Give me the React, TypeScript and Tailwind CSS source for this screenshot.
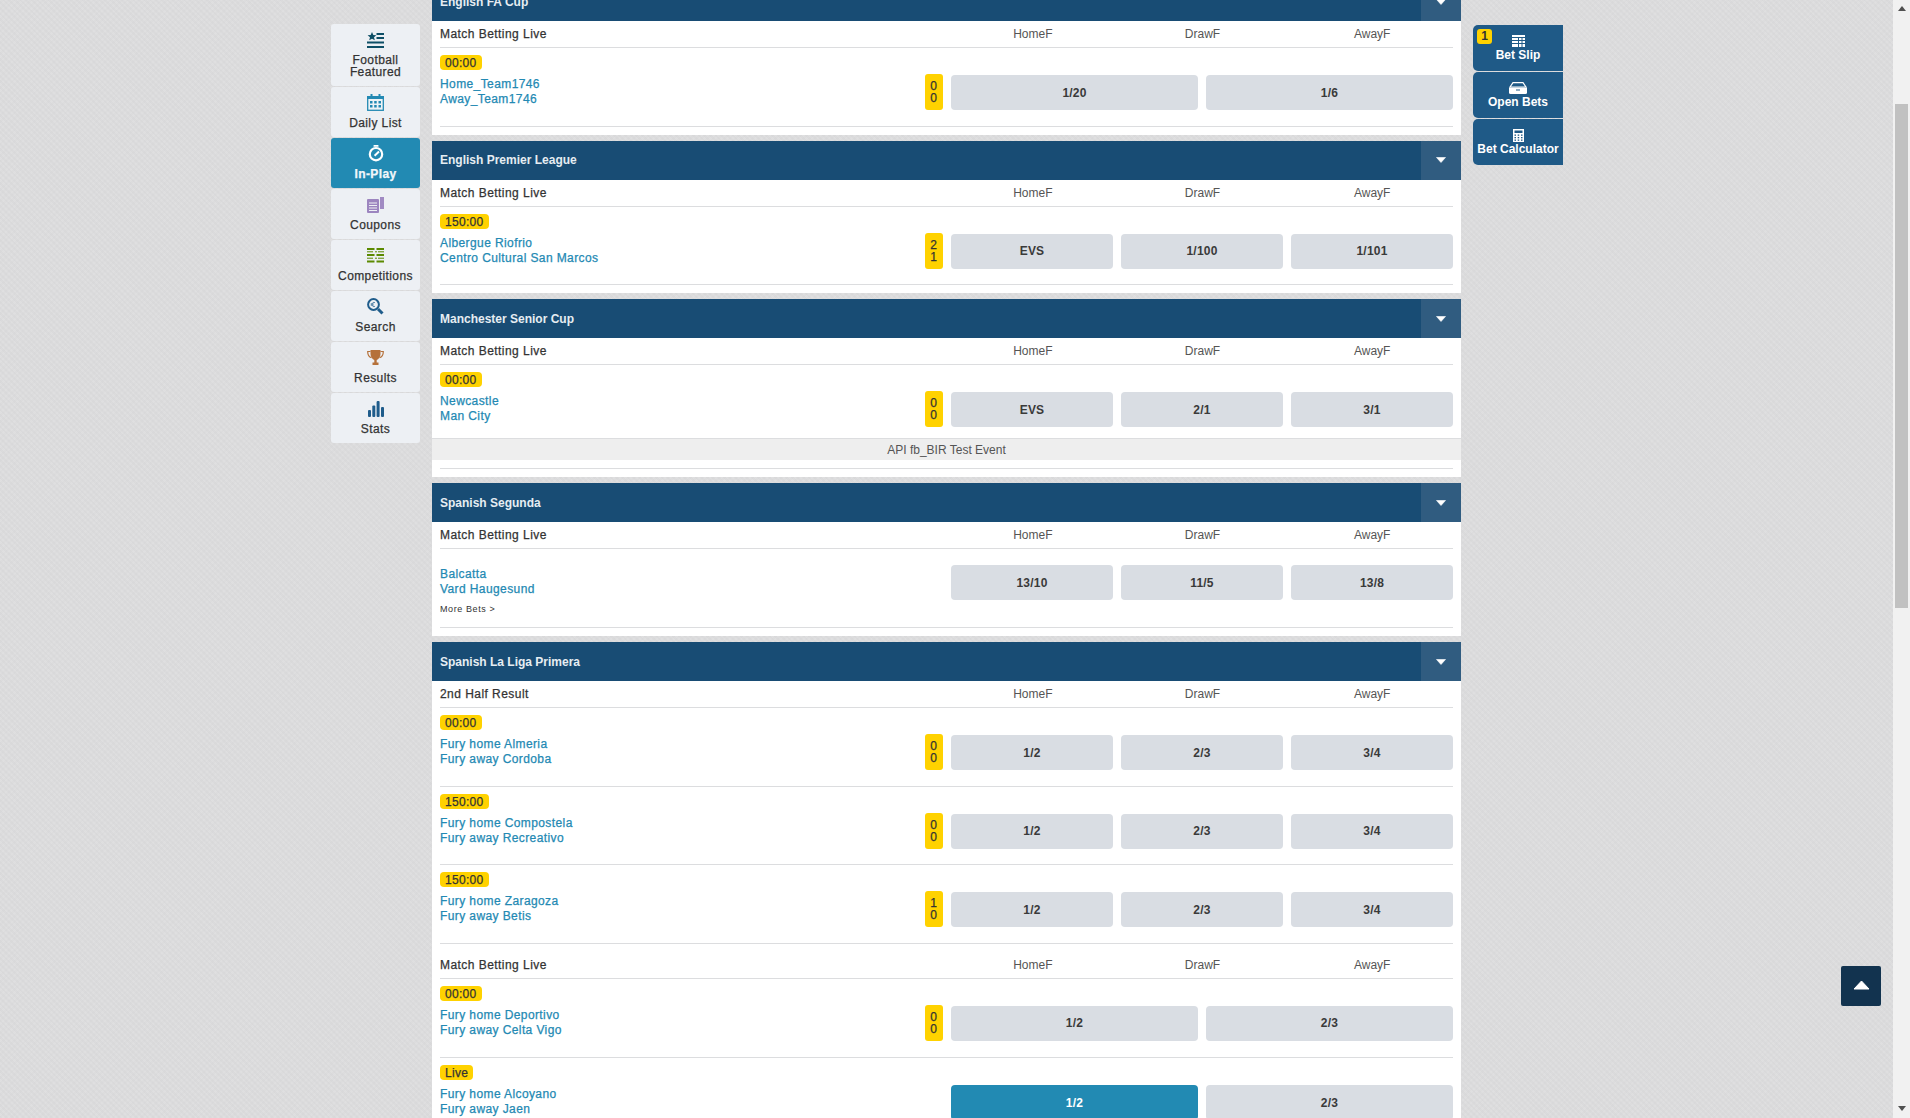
import React from "react";

const font = "font-['Liberation_Sans',Arial,sans-serif]";
const thick = "[-webkit-text-stroke:0.25px_currentColor]";

function IconFeatured() {
  return (
    <svg width="17" height="16" viewBox="0 0 17 16" fill="#0e4f66">
      <path d="M5 0l1.3 2.9 3.1.3-2.4 2 .8 3L5 6.7 2.200 8.200l.8-3-2.400-2 3.100-.3z" />
      <rect x="9.500" y="1" width="7.500" height="2" />
      <rect x="9.500" y="5" width="7.500" height="2" />
      <rect x="0" y="9.500" width="17" height="2" />
      <rect x="0" y="14" width="17" height="2" />
    </svg>
  );
}
function IconCalendar() {
  return (
    <svg width="17" height="17" viewBox="0 0 17 17" fill="none">
      <rect x="0.700" y="2.700" width="15.600" height="13.600" stroke="#2389b3" strokeWidth="1.300" fill="#eef3f6" />
      <rect x="0" y="2" width="17" height="3" fill="#2389b3" />
      <rect x="3.500" y="0" width="2" height="3.500" fill="#2389b3" />
      <rect x="11.500" y="0" width="2" height="3.500" fill="#2389b3" />
      <g fill="#2389b3">
        <rect x="3" y="7" width="2.500" height="2.500" /><rect x="7.200" y="7" width="2.500" height="2.500" /><rect x="11.500" y="7" width="2.500" height="2.500" />
        <rect x="3" y="11" width="2.500" height="2.500" /><rect x="7.200" y="11" width="2.500" height="2.500" /><rect x="11.500" y="11" width="2.500" height="2.500" />
      </g>
    </svg>
  );
}
function IconWatch() {
  return (
    <svg width="16" height="17" viewBox="0 0 16 17" fill="none">
      <circle cx="8" cy="9.200" r="6.200" stroke="#fff" strokeWidth="2.200" />
      <rect x="5.500" y="0" width="5" height="1.800" rx=".5" fill="#fff" />
      <path d="M6.600 10.700L11 6.500" stroke="#fff" strokeWidth="2" />
    </svg>
  );
}
function IconCoupons() {
  return (
    <svg width="17" height="16" viewBox="0 0 17 16">
      <rect x="13" y="0" width="4" height="12" fill="#a08ac2" />
      <rect x="12" y="1" width="1" height="13" fill="#eef1f4" />
      <rect x="0" y="2" width="12" height="14" rx="1" fill="#9c85bf" />
      <g fill="#eef1f4">
        <rect x="2" y="5.500" width="8" height="1" /><rect x="2" y="8" width="8" height="1" /><rect x="2" y="10.500" width="8" height="1" /><rect x="2" y="13" width="8" height="1" />
      </g>
    </svg>
  );
}
function IconCompetitions() {
  return (
    <svg width="17" height="15" viewBox="0 0 17 15" fill="#5c8a00">
      <rect x="0" y="0" width="7.500" height="2" /><rect x="9.500" y="0" width="7.500" height="2" />
      <rect x="0" y="6" width="7.500" height="2" /><rect x="9.500" y="6" width="7.500" height="2" />
      <rect x="0" y="12.500" width="7.500" height="2" /><rect x="9.500" y="12.500" width="7.500" height="2" />
      <rect x="0" y="3.300" width="6" height="1" /><rect x="8" y="3.300" width="2" height="1" /><rect x="11" y="3.300" width="6" height="1" />
      <rect x="0" y="9.700" width="6" height="1" /><rect x="8" y="9.700" width="2" height="1" /><rect x="11" y="9.700" width="6" height="1" />
    </svg>
  );
}
function IconSearch() {
  return (
    <svg width="17" height="17" viewBox="0 0 17 17" fill="none">
      <circle cx="6.500" cy="6.500" r="5.400" stroke="#1f5c8b" strokeWidth="2" />
      <path d="M11 11l4.500 4.500" stroke="#1f5c8b" strokeWidth="3" />
      <path d="M8 4.700c-1.500-.8-3-.2-3 1.800s1.500 2.600 3 1.800M3.700 5.900h3M3.700 7.100h3" stroke="#1f5c8b" strokeWidth=".7" />
    </svg>
  );
}
function IconTrophy() {
  return (
    <svg width="17" height="16" viewBox="0 0 17 16" fill="#b5713a">
      <path d="M3.500 0h10v4c0 3-2 5.300-3.800 6v2.500h1.800V15H5.500v-2.500h1.800V10C5.500 9.300 3.500 7 3.500 4z" />
      <path d="M3.500 1.500H.7c0 3 1 5.500 3.800 6.200M13.500 1.500h2.800c0 3-1 5.500-3.800 6.200" fill="none" stroke="#b5713a" strokeWidth="1.200" />
    </svg>
  );
}
function IconStats() {
  return (
    <svg width="16" height="16" viewBox="0 0 16 16" fill="#1f5c8b">
      <rect x="0" y="9" width="3" height="7" rx="1" />
      <rect x="4.300" y="4.500" width="3" height="11.500" rx="1" />
      <rect x="8.600" y="0" width="3" height="16" rx="1" />
      <rect x="13" y="6" width="3" height="10" rx="1" />
    </svg>
  );
}
function IconSlip() {
  return (
    <svg width="13" height="12" viewBox="0 0 13 12" fill="#fff">
      <rect x="0" y="0" width="13" height="2" />
      <rect x="0" y="3" width="6" height="2" /><rect x="7" y="3" width="2.500" height="2" /><rect x="10.500" y="3" width="2.500" height="2" />
      <rect x="0" y="6" width="6" height="2" /><rect x="7" y="6" width="2.500" height="2" /><rect x="10.500" y="6" width="2.500" height="2" />
      <rect x="0" y="9" width="6" height="3" /><rect x="7" y="9" width="2.500" height="3" /><rect x="10.500" y="9" width="2.500" height="3" />
    </svg>
  );
}
function IconOpen() {
  return (
    <svg width="18" height="12" viewBox="0 0 18 12">
      <path d="M4 .6h10l3 4.400H1z" fill="none" stroke="#fff" strokeWidth="1.200" />
      <path d="M0 5.500h18V10.500a1.500 1.500 0 01-1.500 1.500h-15A1.500 1.500 0 010 10.500z" fill="#fff" />
      <rect x="7" y="7.500" width="4" height="1" fill="#1f5a87" />
    </svg>
  );
}
function IconCalc() {
  return (
    <svg width="11" height="13" viewBox="0 0 11 13" fill="none">
      <rect x="0" y="0" width="11" height="13" fill="#fff" />
      <rect x="1.500" y="1.500" width="8" height="2.500" fill="#1f5a87" />
      <g fill="#1f5a87">
        <rect x="1.500" y="5.500" width="1.500" height="1.300" /><rect x="4.700" y="5.500" width="1.500" height="1.300" /><rect x="8" y="5.500" width="1.500" height="1.300" />
        <rect x="1.500" y="8" width="1.500" height="1.300" /><rect x="4.700" y="8" width="1.500" height="1.300" /><rect x="8" y="8" width="1.500" height="1.300" />
        <rect x="1.500" y="10.500" width="1.500" height="1.300" /><rect x="4.700" y="10.500" width="1.500" height="1.300" /><rect x="8" y="10.500" width="1.500" height="1.300" />
      </g>
    </svg>
  );
}

const nav: { label: React.ReactNode; icon: React.ReactNode; tall?: boolean; active?: boolean }[] = [
  { label: <>Football<br />Featured</>, icon: <IconFeatured />, tall: true },
  { label: "Daily List", icon: <IconCalendar /> },
  { label: "In-Play", icon: <IconWatch />, active: true },
  { label: "Coupons", icon: <IconCoupons /> },
  { label: "Competitions", icon: <IconCompetitions /> },
  { label: "Search", icon: <IconSearch /> },
  { label: "Results", icon: <IconTrophy /> },
  { label: "Stats", icon: <IconStats /> },
];

function Sidebar() {
  return (
    <nav className="w-[89px] shrink-0 mt-[24px] flex flex-col gap-[1px]">
      {nav.map((n, i) => (
        <div
          key={i}
          className={`flex flex-col items-center rounded-[3px] pt-[7px] ${n.tall ? "h-[62px]" : "h-[50px]"} ${
            n.active ? "bg-[#228ab3] text-[#f2f7fa] font-bold" : "bg-[#edf0f4] text-[#333]"
          }`}
        >
          <div className="h-[17px] flex items-center justify-center">{n.icon}</div>
          <div className={`mt-[6px] text-[12px] leading-[12px] tracking-[0.4px] text-center whitespace-nowrap ${thick}`}>{n.label}</div>
        </div>
      ))}
    </nav>
  );
}

function Chevron() {
  return (
    <svg width="10" height="6" viewBox="0 0 10 6" fill="#fff">
      <path d="M.5 .5h9L5 5.500z" stroke="#fff" strokeWidth=".6" strokeLinejoin="round" />
    </svg>
  );
}

function Market({ name, first }: { name: string; first?: boolean }) {
  return (
    <div className={`flex items-center border-b border-[#dcdddf] ${first ? "h-[27px]" : "h-[35px] pt-[8px]"}`}>
      <div className={`flex-1 text-[12px] text-[#333] tracking-[0.45px] ${thick}`}>{name}</div>
      <div className="w-[502px] grid grid-cols-3 gap-[8px] pl-[1px] text-[12px] text-[#555] text-center">
        <span>HomeF</span>
        <span>DrawF</span>
        <span>AwayF</span>
      </div>
    </div>
  );
}

type Ev = {
  time?: string;
  home: string;
  away: string;
  score?: [number, number];
  odds: string[];
  selected?: number;
  more?: boolean;
  noBorder?: boolean;
  h?: string;
};

function Event({ e }: { e: Ev }) {
  const two = e.odds.length === 2;
  return (
    <div
      className={`${e.h ?? "h-[78.5px]"} shrink-0 ${e.noBorder ? "" : "border-b border-[#dcdddf]"} ${
        e.time ? "pt-[7px]" : "pt-[16px]"
      }`}
    >
      {e.time && (
        <div className="h-[15px] flex">
          <span className={`px-[5px] rounded-[4px] bg-[#ffd200] text-[#333] text-[12px] leading-[16px] tracking-[0.3px] ${thick}`}>
            {e.time}
          </span>
        </div>
      )}
      <div className={`flex items-start ${e.time ? "mt-[5px]" : ""}`}>
        <div className="flex-1 min-w-0 pt-[2px]">
          <div className={`text-[12px] leading-[15px] text-[#2389b3] tracking-[0.4px] ${thick}`}>
            {e.home}
            <br />
            {e.away}
          </div>
          {e.more && (
            <div className="mt-[6px] text-[9px] leading-[12px] tracking-[0.6px] text-[#333]">More Bets &gt;</div>
          )}
        </div>
        {e.score && (
          <div className={`w-[18px] h-[36px] mt-[-1px] mr-[8px] rounded-[3px] bg-[#ffd200] flex flex-col items-center justify-center pr-[1px] text-[12px] leading-[12px] text-[#333] ${thick}`}>
            <span>{e.score[0]}</span>
            <span>{e.score[1]}</span>
          </div>
        )}
        <div className={`w-[502px] shrink-0 grid gap-[8px] ${two ? "grid-cols-2" : "grid-cols-3"}`}>
          {e.odds.map((o, i) => (
            <div
              key={i}
              className={`h-[35px] rounded-[4px] flex items-center justify-center text-[12px] tracking-[0.2px] font-bold ${
                e.selected === i ? "bg-[#228ab3] text-white" : "bg-[#d9dde3] text-[#3a3a3a]"
              }`}
            >
              {o}
            </div>
          ))}
        </div>
      </div>
    </div>
  );
}

function Header({ title }: { title: string }) {
  return (
    <div className="h-[39px] bg-[#184c74] flex items-center">
      <div className="flex-1 pl-[8px] text-[12px] font-bold text-[#e6edf2]">{title}</div>
      <div className="w-[40px] h-full bg-[#305c80] flex items-center justify-center">
        <Chevron />
      </div>
    </div>
  );
}

function Main() {
  return (
    <main className="w-[1029px] shrink-0 mt-[-18px] mx-[12px] flex flex-col gap-[6px]">
      <section className="bg-white">
        <Header title="English FA Cup" />
        <div className="px-[8px] pb-[8px]">
          <Market name="Match Betting Live" first />
          <Event e={{ time: "00:00", home: "Home_Team1746", away: "Away_Team1746", score: [0, 0], odds: ["1/20", "1/6"] }} />
        </div>
      </section>
      <section className="bg-white">
        <Header title="English Premier League" />
        <div className="px-[8px] pb-[8px]">
          <Market name="Match Betting Live" first />
          <Event e={{ time: "150:00", home: "Albergue Riofrio", away: "Centro Cultural San Marcos", score: [2, 1], odds: ["EVS", "1/100", "1/101"] }} />
        </div>
      </section>
      <section className="bg-white">
        <Header title="Manchester Senior Cup" />
        <div className="px-[8px] pb-[8px]">
          <Market name="Match Betting Live" first />
          <Event e={{ time: "00:00", home: "Newcastle", away: "Man City", score: [0, 0], odds: ["EVS", "2/1", "3/1"], noBorder: true, h: "h-[73px]" }} />
          <div className="-mx-[8px] h-[22px] bg-[#eeeeee] border-t border-[#dcdddf] flex items-center justify-center text-[12px] text-[#555]">
            API fb_BIR Test Event
          </div>
          <div className="h-[9px] border-b border-[#dcdddf]" />
        </div>
      </section>
      <section className="bg-white">
        <Header title="Spanish Segunda" />
        <div className="px-[8px] pb-[8px]">
          <Market name="Match Betting Live" first />
          <Event e={{ home: "Balcatta", away: "Vard Haugesund", odds: ["13/10", "11/5", "13/8"], more: true, h: "h-[79px]" }} />
        </div>
      </section>
      <section className="bg-white">
        <Header title="Spanish La Liga Primera" />
        <div className="px-[8px] pb-[8px]">
          <Market name="2nd Half Result" first />
          <Event e={{ time: "00:00", home: "Fury home Almeria", away: "Fury away Cordoba", score: [0, 0], odds: ["1/2", "2/3", "3/4"] }} />
          <Event e={{ time: "150:00", home: "Fury home Compostela", away: "Fury away Recreativo", score: [0, 0], odds: ["1/2", "2/3", "3/4"] }} />
          <Event e={{ time: "150:00", home: "Fury home Zaragoza", away: "Fury away Betis", score: [1, 0], odds: ["1/2", "2/3", "3/4"] }} />
          <Market name="Match Betting Live" />
          <Event e={{ time: "00:00", home: "Fury home Deportivo", away: "Fury away Celta Vigo", score: [0, 0], odds: ["1/2", "2/3"], h: "h-[79.5px]" }} />
          <Event e={{ time: "Live", home: "Fury home Alcoyano", away: "Fury away Jaen", odds: ["1/2", "2/3"], selected: 0 }} />
        </div>
      </section>
    </main>
  );
}

function RightPanel() {
  const items = [
    { label: "Bet Slip", icon: <IconSlip />, badge: true },
    { label: "Open Bets", icon: <IconOpen /> },
    { label: "Bet Calculator", icon: <IconCalc /> },
  ];
  return (
    <aside className="w-[90px] shrink-0 mt-[25px] flex flex-col gap-[1px]">
      {items.map((it) => (
        <div key={it.label} className="relative h-[46px] bg-[#1f5a87] rounded-l-[5px] flex flex-col items-center pt-[10px] text-white">
          {it.badge && (
            <span className="absolute left-[4px] top-[4px] w-[15px] h-[15px] rounded-[3px] bg-[#ffd200] text-[#333] text-[12px] leading-[15px] font-bold text-center">
              1
            </span>
          )}
          <div className="h-[12px] flex items-center justify-center">{it.icon}</div>
          <div className="mt-[1px] text-[12px] leading-[14px] font-bold whitespace-nowrap">{it.label}</div>
        </div>
      ))}
    </aside>
  );
}

function Scrollbar() {
  return (
    <div className="ml-auto w-[17px] shrink-0 h-full bg-[#f1f1f1] flex flex-col items-center justify-between relative">
      <svg className="mt-[6px]" width="8" height="5" viewBox="0 0 8 5" fill="#505050"><path d="M4 0l4 5H0z" /></svg>
      <svg className="mb-[7px]" width="8" height="5" viewBox="0 0 8 5" fill="#505050"><path d="M0 0h8L4 5z" /></svg>
      <div className="absolute left-[2px] top-[104px] w-[13px] h-[504px] bg-[#c1c1c1]" />
    </div>
  );
}

export default function App() {
  return (
    <div
      className={`${font} relative h-screen w-full overflow-hidden flex pl-[331px] items-start bg-[#dcdcdd] bg-[repeating-linear-gradient(45deg,rgba(205,205,207,0.22)_0,rgba(205,205,207,0.22)_2px,transparent_2px,transparent_4px),repeating-linear-gradient(-45deg,rgba(232,232,233,0.22)_0,rgba(232,232,233,0.22)_2px,transparent_2px,transparent_4px)]`}
    >
      <Sidebar />
      <Main />
      <RightPanel />
      <Scrollbar />
      <button className="absolute left-[1841px] top-[966px] w-[40px] h-[40px] rounded-[2px] bg-[#12334f] flex items-center justify-center pb-[2px]">
        <svg width="17" height="10" viewBox="0 0 17 10" fill="#fff"><path d="M8.500 1L16 9H1z" stroke="#fff" strokeLinejoin="round" /></svg>
      </button>
    </div>
  );
}
